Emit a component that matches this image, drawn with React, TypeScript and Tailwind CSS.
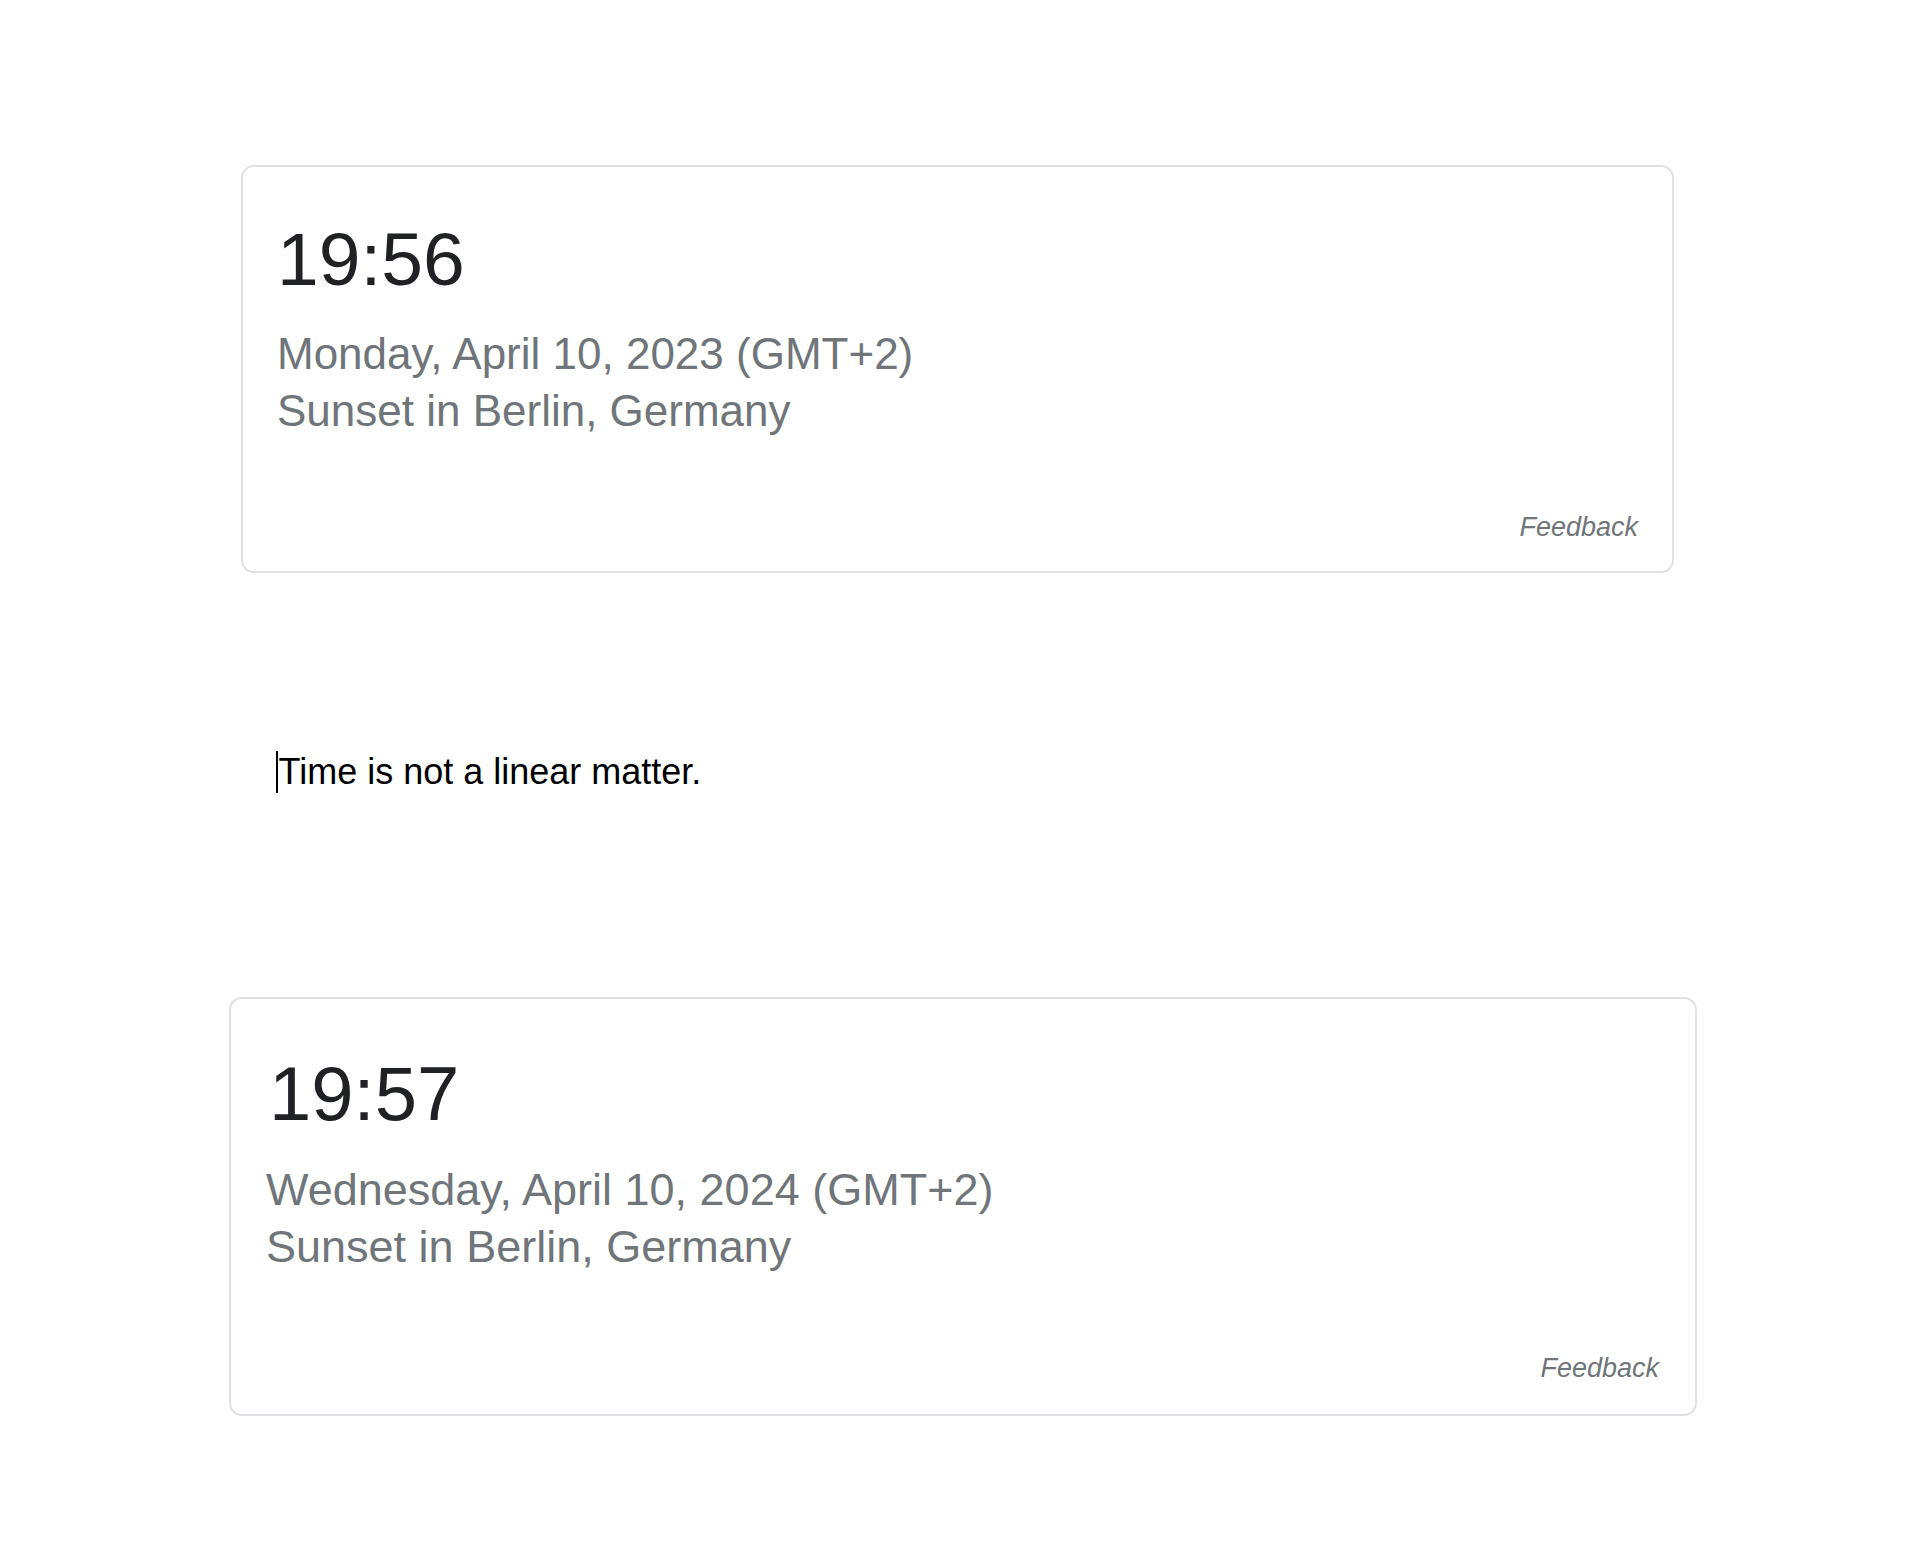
export default function App() {
  return (
    <div className="bg-white min-h-screen pt-[165px] pb-[145px] font-['Liberation_Sans',Arial,sans-serif]">
      {/* First time card */}
      <div className="ml-[241px] w-[1433px] border-2 border-[#dfe1e5] rounded-[13px] pl-[34px] pr-[34px] pt-[54px] pb-[29px]">
        <div className="text-[75px] leading-[76px] text-[#202124]">19:56</div>
        <div className="mt-[28px] text-[44px] leading-[57px] text-[#70757a]">
          <div>Monday, April 10, 2023 (GMT+2)</div>
          <div>Sunset in Berlin, Germany</div>
        </div>
        <div className="mt-[73px] text-right text-[27px] leading-[30px] italic text-[#70757a]">Feedback</div>
      </div>

      {/* Quote */}
      <div className="mt-[178px] ml-[276px] flex items-center h-[42px]">
        <span className="w-[1.5px] h-[42px] bg-black"></span>
        <span className="ml-[1px] text-[36px] leading-[42px] text-black">Time is not a linear matter.</span>
      </div>

      {/* Second time card */}
      <div className="mt-[204px] ml-[229px] w-[1468px] border-2 border-[#dfe1e5] rounded-[13px] pl-[35px] pr-[36px] pt-[56px] pb-[31px]">
        <div className="text-[76px] leading-[78px] text-[#202124] pl-[3px]">19:57</div>
        <div className="mt-[28px] text-[45px] leading-[57px] text-[#70757a]">
          <div>Wednesday, April 10, 2024 (GMT+2)</div>
          <div>Sunset in Berlin, Germany</div>
        </div>
        <div className="mt-[78px] text-right text-[27px] leading-[30px] italic text-[#70757a]">Feedback</div>
      </div>
    </div>
  );
}
